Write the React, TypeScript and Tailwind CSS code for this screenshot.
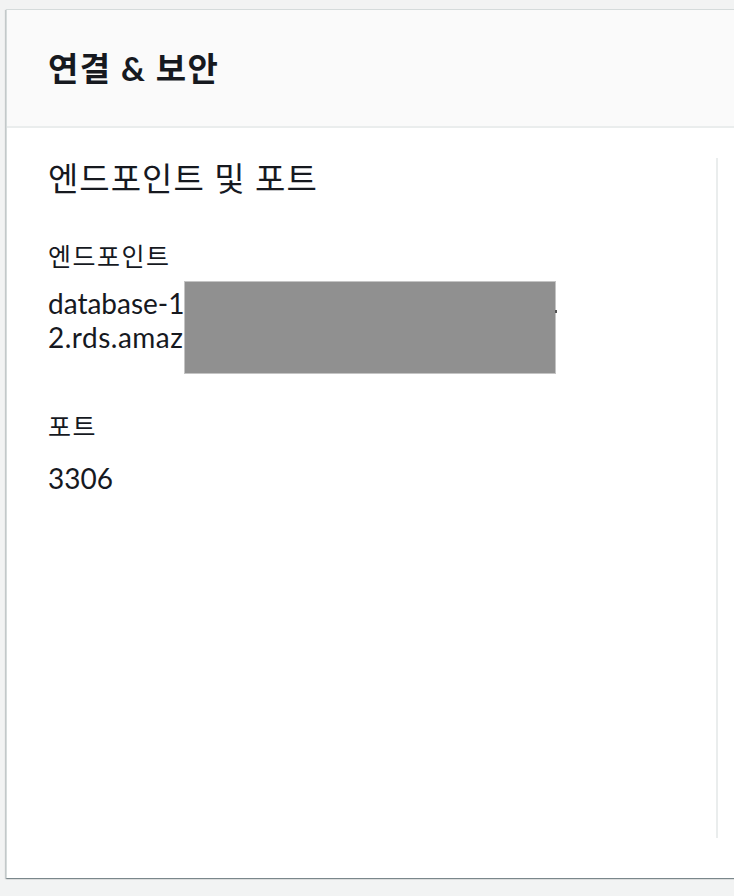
import React from "react";

const font = { fontFamily: 'Lato, "Noto Sans CJK KR", sans-serif' };

export default function App() {
  return (
    <div
      className="min-h-[896px] bg-[#f2f3f3] pt-[9px] pl-[6px] overflow-hidden text-[#16191f]"
      style={font}
    >
      <div className="h-[869px] w-[760px] bg-white border-l border-t border-[#d5dbdb] shadow-[0_1px_1px_0_rgba(0,28,36,0.3),1px_1px_1px_0_rgba(0,28,36,0.15),-1px_1px_1px_0_rgba(0,28,36,0.15)] flex flex-col">
        <div className="h-[118px] bg-[#fafafa] border-b-2 border-[#eaeded] pl-[41px] flex items-center">
          <h2 className="text-[33px] leading-[40px] font-bold tracking-[1.4px]">연결 &amp; 보안</h2>
        </div>
        <div className="flex pt-[30px]">
          <div className="w-[711px] h-[680px] border-r-2 border-[#eaeded] pl-[41px]">
            <h3 className="text-[33px] leading-[40px] font-normal tracking-[1px]">엔드포인트 및 포트</h3>
            <div className="mt-[42px] text-[25px] leading-[32px] tracking-[1.5px]">엔드포인트</div>
            <div className="relative mt-[14px] text-[28px] leading-[34px]">
              <div>database-1</div>
              <div className="tracking-[0.5px]">2.rds.amaz</div>
              <div className="absolute left-[136px] top-[-5px] w-[372px] h-[93px] bg-[#909090] border border-[#c4c4c4]" />
              <div className="absolute left-[507px] top-[24px] w-[2px] h-[3px] bg-[#555]" />
            </div>
            <div className="mt-[56px] text-[25px] leading-[32px] tracking-[1.5px]">포트</div>
            <div className="mt-[19px] text-[28px] leading-[34px]">3306</div>
          </div>
        </div>
      </div>
    </div>
  );
}
